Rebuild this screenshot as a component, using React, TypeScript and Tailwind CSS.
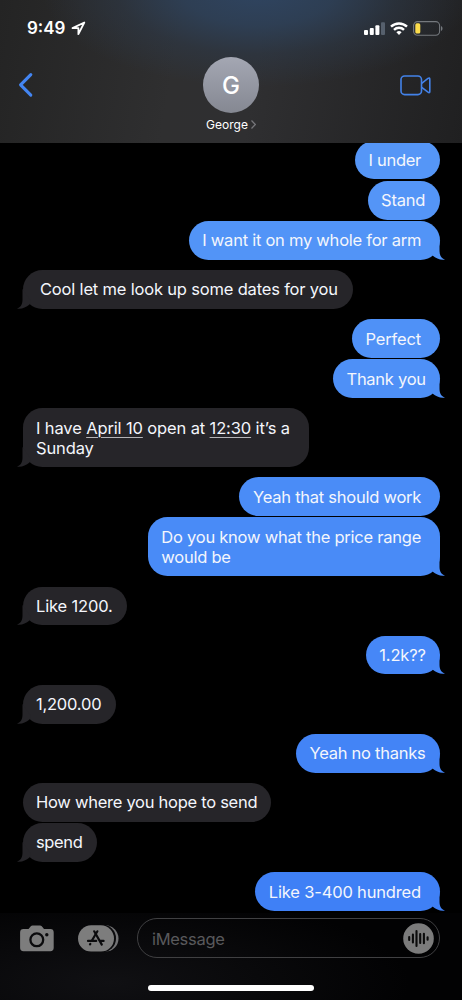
import type { ReactNode } from 'react';

interface Message {
  id: number;
  sent?: boolean;
  tail?: boolean;
  text: ReactNode;
  size: string;
  color?: string;
}

const MESSAGES: Message[] = [
  { id: 1, sent: true, text: 'I under', size: 'w-[84.5px] pl-[13.5px] tracking-[-0.28px]', color: 'bg-[#5596f7] text-[#5596f7]' },
  { id: 2, sent: true, text: 'Stand', size: 'w-[72px] pl-[13.5px] tracking-[-0.2px]', color: 'bg-[#5495f7] text-[#5495f7]' },
  { id: 3, sent: true, tail: true, text: 'I want it on my whole for arm', size: 'w-[251px] pl-[13.8px] tracking-[-0.25px]', color: 'bg-[#5294f7] text-[#5294f7]' },
  { id: 4, tail: true, text: 'Cool let me look up some dates for you', size: 'w-[330.5px] pl-[17.5px] tracking-[-0.18px]' },
  { id: 5, sent: true, text: 'Perfect', size: 'w-[88px] pl-[14px] tracking-[-0.15px]', color: 'bg-[#4f91f7] text-[#4f91f7]' },
  { id: 6, sent: true, tail: true, text: 'Thank you', size: 'w-[107px] pl-[14px] tracking-[-0.27px]', color: 'bg-[#4e90f7] text-[#4e90f7]' },
  {
    id: 7,
    tail: true,
    text: (
      <>
        I have <Detected>April 10</Detected> open at <Detected>12:30</Detected> it’s a<br />
        Sunday
      </>
    ),
    size: 'w-[286.5px] pl-[13.5px] tracking-[-0.13px]',
  },
  { id: 8, sent: true, text: 'Yeah that should work', size: 'w-[200.5px] pl-[14px] tracking-[-0.25px]', color: 'bg-[#4a8cf7] text-[#4a8cf7]' },
  {
    id: 9,
    sent: true,
    tail: true,
    text: (
      <>
        Do you know what the price range
        <br />
        would be
      </>
    ),
    size: 'w-[292px] pl-[13.8px] tracking-[-0.24px]',
    color: 'bg-[#498bf7] text-[#498bf7]',
  },
  { id: 10, tail: true, text: 'Like 1200.', size: 'w-[104.5px] pl-[13.5px] tracking-[-0.15px]' },
  { id: 11, sent: true, tail: true, text: '1.2k??', size: 'w-[74px] pl-[13.8px] tracking-[-0.15px]', color: 'bg-[#4687f7] text-[#4687f7]' },
  { id: 12, tail: true, text: '1,200.00', size: 'w-[93px] pl-[13.5px] tracking-[-0.22px]' },
  { id: 13, sent: true, tail: true, text: 'Yeah no thanks', size: 'w-[144px] pl-[14px] tracking-[-0.26px]', color: 'bg-[#4384f6] text-[#4384f6]' },
  { id: 14, text: 'How where you hope to send', size: 'w-[248.5px] pl-[13.5px] tracking-[-0.27px]' },
  { id: 15, tail: true, text: 'spend', size: 'w-[74.5px] pl-[13.5px] tracking-[-0.36px]' },
  { id: 16, sent: true, tail: true, text: 'Like 3-400 hundred', size: 'w-[184.5px] pl-[13.8px] tracking-[-0.17px]', color: 'bg-[#3f80f6] text-[#3f80f6]' },
];

function Detected({ children }: { children: ReactNode }) {
  return <span className="underline decoration-[#b5b5b8] decoration-1 underline-offset-[3px]">{children}</span>;
}

function Tail({ sent }: { sent?: boolean }) {
  return (
    <svg
      viewBox="0 0 14 20"
      className={`absolute bottom-0 h-[20px] w-[14px] ${sent ? '-right-[5.5px]' : '-left-[5.5px] -scale-x-100'}`}
      fill="currentColor"
    >
      <path d="M8.5 0V11C8.6 15.2 10.2 18.4 14 19.6C9.5 20.3 5.2 18.8 1.5 15.6L0 12Z" />
    </svg>
  );
}

function Bubble({ message }: { message: Message }) {
  const { sent, tail, text, size, color } = message;
  return (
    <div
      className={`relative shrink-0 rounded-[19.5px] py-[9.45px] ${size} ${
        sent ? `self-end ${color}` : 'self-start bg-[#262529] text-[#262529]'
      } ${tail ? 'mb-[10.2px]' : 'mb-[1.3px]'}`}
    >
      {tail && <Tail sent={sent} />}
      <p className="relative top-[0.1px] whitespace-nowrap text-[16.5px] leading-[20px] text-[#f4f6fc]">{text}</p>
    </div>
  );
}

function StatusBar() {
  return (
    <div className="flex h-[56px] items-center justify-between pl-[27px] pr-[19px]">
      <div className="flex items-center gap-[5px]">
        <span className="text-[17px] font-semibold leading-5">9:49</span>
        <svg viewBox="0 0 15 15" className="h-[15px] w-[15px]" fill="none" stroke="white" strokeWidth="1.8" strokeLinejoin="round">
          <path d="M13.3 1.5L1.5 7.1H7.4V13.2Z" />
        </svg>
      </div>
      <div className="flex items-center gap-[5px]">
        <svg viewBox="0 0 21 13" className="h-[13px] w-[21px]" fill="white">
          <rect x="0" y="8" width="4" height="5" rx="1" />
          <rect x="5.8" y="6" width="4" height="7" rx="1" />
          <rect x="11.4" y="3.2" width="4" height="9.8" rx="1" />
          <rect x="17" y="0.2" width="4" height="12.8" rx="1" fill="#56606d" />
        </svg>
        <svg viewBox="0 0 18 13" className="h-[13px] w-[18px]" fill="none" stroke="white" strokeWidth="2.4">
          <path d="M1 4.7a11.5 11.5 0 0 1 16 0" />
          <path d="M4 7.8a7.1 7.1 0 0 1 10 0" />
          <path d="M9 13L6.4 10.3a3.7 3.7 0 0 1 5.2 0Z" fill="white" stroke="none" />
        </svg>
        <svg viewBox="0 0 30 15" className="h-[15px] w-[30px]">
          <rect x="0.6" y="0.6" width="26" height="13.6" rx="4" fill="none" stroke="#75797e" strokeWidth="1.1" />
          <rect x="2.3" y="2.3" width="5" height="10.2" rx="1.6" fill="#fbdc4c" />
          <path d="M28 5v5c2-.8 2-4.2 0-5Z" fill="#75797e" />
        </svg>
      </div>
    </div>
  );
}

function Header() {
  return (
    <header className="relative z-10 h-[143px] shrink-0 bg-[radial-gradient(ellipse_215px_95px_at_258px_-8px,#2f4460_0%,#2e4159dd_35%,#2d3b4d77_65%,transparent_100%),linear-gradient(100deg,#242424_0%,#2f2f30_38%,#2f2f31_55%,#202021_100%)] text-white">
      <StatusBar />
      <div className="grid grid-cols-3 px-[18px] pt-[0.5px]">
        <svg viewBox="0 0 16 26" className="mt-[15.5px] h-[26px] w-[16px]" fill="none" stroke="#4385f2" strokeWidth="3.1" strokeLinecap="round" strokeLinejoin="round">
          <path d="M12.8 2.6L2.6 12.9L12.8 23.2" />
        </svg>
        <div className="flex flex-col items-center">
          <div className="flex h-[56px] w-[56px] items-center justify-center rounded-full bg-linear-to-b from-[#a4a7b3] to-[#858892] pt-[3px] text-[24px] font-medium">
            G
          </div>
          <div className="mt-[5.4px] flex items-center gap-[3px] text-[12px] leading-[14px]">
            George
            <svg viewBox="0 0 5 9" className="h-[9px] w-[5px]" fill="none" stroke="#77777b" strokeWidth="1.2">
              <path d="M0.5 0.5L4.3 4.5L0.5 8.5" />
            </svg>
          </div>
        </div>
        <svg viewBox="0 0 31 21" className="mr-[13px] mt-[18px] h-[21px] w-[31px] justify-self-end" fill="none" stroke="#4382e9" strokeWidth="1.6" strokeLinejoin="round">
          <rect x="1" y="1" width="20.5" height="18.6" rx="3.6" />
          <path d="M21.7 8.3L28 3.4Q29.8 2.2 29.8 4.2V16.4Q29.8 18.4 28 17.2L21.7 12.3" />
        </svg>
      </div>
    </header>
  );
}

function Composer() {
  return (
    <footer className="relative flex h-[87px] shrink-0 items-start bg-[radial-gradient(ellipse_300px_90px_at_110px_70px,#101013,#020203)] pl-[20px] pt-[5px]">
      <svg viewBox="0 0 34 27" className="mt-[7px] h-[27px] w-[34px]" fill="#7d7d7d">
        <path d="M3.5 4H8.5L10.8 1.3Q11.4.5 12.5.5H20Q21.1.5 21.8 1.3L24 4H30.3Q33.7 4 33.7 7.4V22.8Q33.7 26.2 30.3 26.2H3.5Q.1 26.2.1 22.8V7.4Q.1 4 3.5 4Z" />
        <circle cx="16.8" cy="14.8" r="6.4" fill="none" stroke="#0b0b0d" strokeWidth="2.3" />
        <circle cx="26.8" cy="9.8" r="1.7" fill="#0b0b0d" />
      </svg>
      <svg viewBox="0 0 41 27" className="ml-[24px] mt-[7px] h-[27px] w-[41px]">
        <rect x="8" y="0.3" width="32.5" height="26.2" rx="13.1" fill="#737375" />
        <rect x="4" y="-0.5" width="34" height="27.8" rx="13.9" fill="#0b0b0d" />
        <rect x="0" y="0.3" width="36" height="26.2" rx="13.1" fill="#7d7d7d" />
        <g stroke="#0b0b0d" strokeWidth="2.2" strokeLinecap="round" fill="none">
          <path d="M16.2 6.3L23.8 19.6" />
          <path d="M19.4 6.3L13.8 15.8" />
          <path d="M10 15.9H18.2M22.5 15.9H25.6" />
          <path d="M12 19.4L12.3 19" />
        </g>
      </svg>
      <div className="ml-[18px] flex h-[40px] w-[303px] items-center justify-between rounded-full border border-[#404042] pl-[14px] pr-[5px]">
        <span className="pt-[1px] text-[16.5px] leading-5 tracking-[-0.3px] text-[#59595c]">iMessage</span>
        <svg viewBox="0 0 31 31" className="h-[31px] w-[31px]">
          <circle cx="15.5" cy="15.5" r="15.3" fill="#7b7b7b" />
          <g stroke="#0b0b0b" strokeWidth="2.1" strokeLinecap="round">
            <path d="M6.2 14v3M9.9 11.5v8M13.5 8v15M17.2 11v9M20.9 10.8v9.4M24.6 14.2v2.6" />
          </g>
        </svg>
      </div>
      <div className="absolute bottom-[9px] left-[148px] h-[6px] w-[166px] rounded-full bg-white" />
    </footer>
  );
}

export default function App() {
  return (
    <div className="flex h-[1000px] w-[462px] flex-col overflow-hidden bg-black font-['Inter','Liberation_Sans',sans-serif]">
      <Header />
      <main className="flex min-h-0 flex-1 flex-col overflow-hidden pl-[22.5px] pr-[22.5px]">
        <div className="-mt-[2.5px] flex flex-col">
          {MESSAGES.map((message) => (
            <Bubble key={message.id} message={message} />
          ))}
        </div>
      </main>
      <Composer />
    </div>
  );
}
